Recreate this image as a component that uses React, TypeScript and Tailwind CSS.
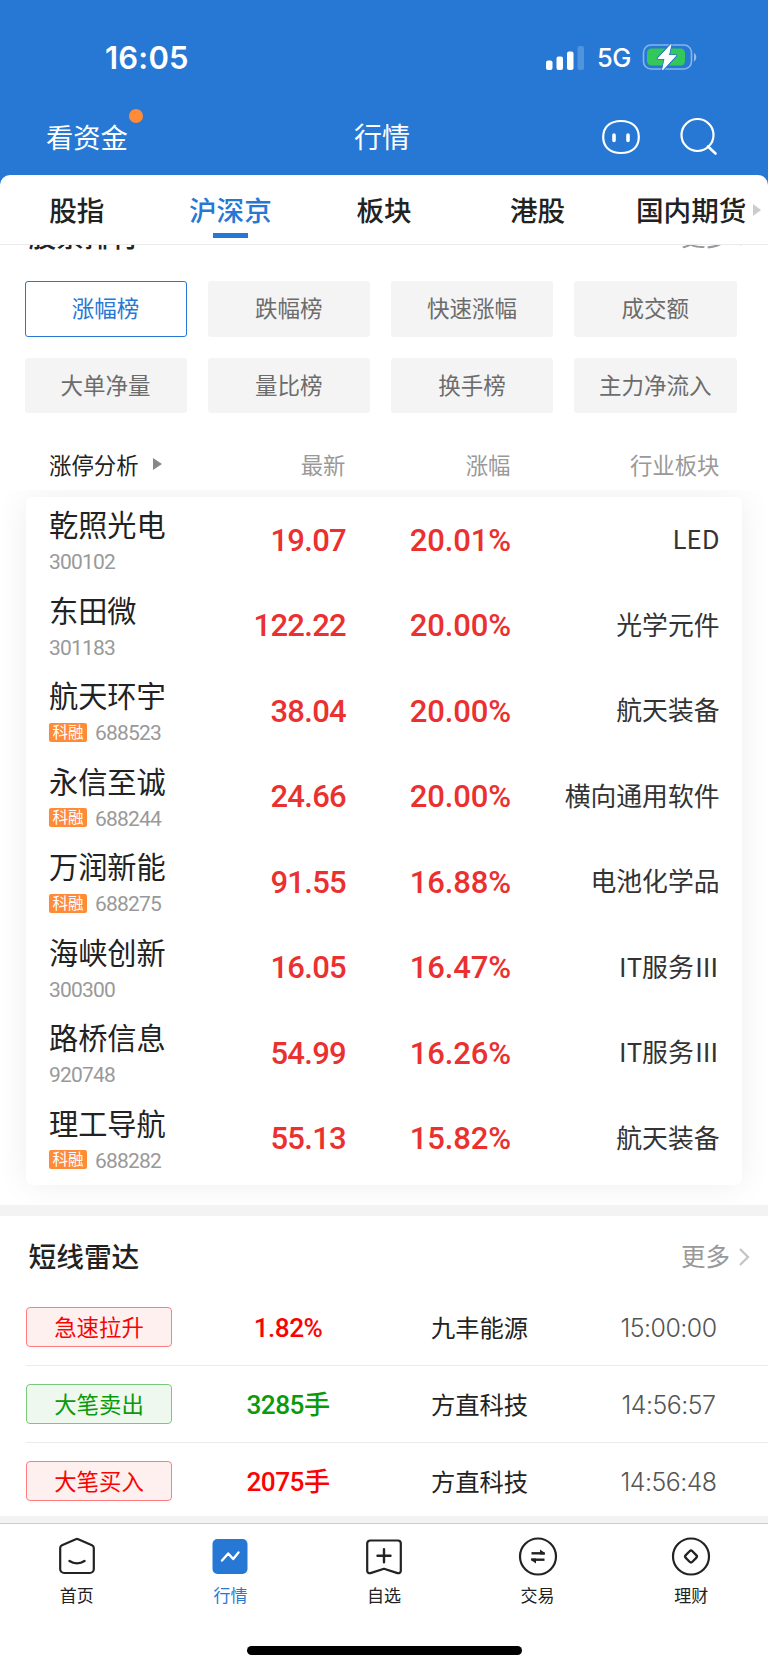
import { useState } from "react";

const tabs = ["股指", "沪深京", "板块", "港股", "国内期货"];

const ranks = ["涨幅榜", "跌幅榜", "快速涨幅", "成交额", "大单净量", "量比榜", "换手榜", "主力净流入"];

const stocks = [
  { name: "乾照光电", code: "300102", price: "19.07", pct: "20.01%", sector: "LED" },
  { name: "东田微", code: "301183", price: "122.22", pct: "20.00%", sector: "光学元件" },
  { name: "航天环宇", code: "688523", price: "38.04", pct: "20.00%", sector: "航天装备", margin: true },
  { name: "永信至诚", code: "688244", price: "24.66", pct: "20.00%", sector: "横向通用软件", margin: true },
  { name: "万润新能", code: "688275", price: "91.55", pct: "16.88%", sector: "电池化学品", margin: true },
  { name: "海峡创新", code: "300300", price: "16.05", pct: "16.47%", sector: "IT服务Ⅲ" },
  { name: "路桥信息", code: "920748", price: "54.99", pct: "16.26%", sector: "IT服务Ⅲ" },
  { name: "理工导航", code: "688282", price: "55.13", pct: "15.82%", sector: "航天装备", margin: true },
];

const radar = [
  { tag: "急速拉升", value: "1.82", unit: "%", name: "九丰能源", time: "15:00:00", up: true },
  { tag: "大笔卖出", value: "3285", unit: "手", name: "方直科技", time: "14:56:57", up: false },
  { tag: "大笔买入", value: "2075", unit: "手", name: "方直科技", time: "14:56:48", up: true },
];

function StatusBar() {
  return (
    <div className="h-[99px] pt-4 flex items-center justify-between pl-[105px] pr-[69px]">
      <span className="font-['Inter'] font-semibold text-[31px] leading-none tracking-[0.2px]">16:05</span>
      <div className="flex items-center">
        <svg width="39" height="26" viewBox="0 0 39 26" fill="#fff">
          <rect x="0" y="15.5" width="6.5" height="9.5" rx="2" />
          <rect x="10.500" y="11.500" width="6.5" height="13.5" rx="2" />
          <rect x="21" y="6.500" width="6.5" height="18.5" rx="2" />
          <rect x="31.500" y="1" width="6.5" height="24" rx="2" opacity="0.2" />
        </svg>
        <span className="ml-[12px] mt-px w-[35px] font-['Inter'] font-medium text-[25.500px] leading-none tracking-[-0.6px]">5G</span>
        <svg className="ml-[10px] mr-px -mt-[2px]" width="56" height="28" viewBox="0 0 56 28">
          <rect x="1.5" y="2" width="48" height="24" rx="7.5" fill="none" stroke="#fff" strokeOpacity="0.45" strokeWidth="1.6" />
          <rect x="5" y="5.5" width="38" height="17" rx="4.5" fill="#34c759" />
          <path d="M52 10v8.500c3-1.700 3-6.800 0-8.500z" fill="#fff" fillOpacity="0.5" />
          <path
            d="M29 1.500 16 15.500h7L20.500 27 34 12.500h-7.500z"
            fill="#fff"
            stroke="#2678d4"
            strokeWidth="2.600"
            paintOrder="stroke"
            strokeLinejoin="round"
          />
          <path d="M29 1.500 16 15.500h7L20.500 27 34 12.500h-7.500z" fill="#fff" stroke="#fff" strokeWidth="0.800" strokeLinejoin="round" />
        </svg>
      </div>
    </div>
  );
}

function NavBar() {
  return (
    <div className="h-[76px] grid grid-cols-3 items-center pl-[46px] pr-[50px]">
      <div className="relative -mt-[3px] justify-self-start text-[27.300px] leading-10">
        看资金
        <i className="absolute left-[83px] -top-[7px] size-[14px] rounded-full bg-[#ff8b38]" />
      </div>
      <div className="-mt-[3px] justify-self-center text-[28px] leading-10">行情</div>
      <div className="justify-self-end flex items-center">
        <svg width="40" height="36" viewBox="0 0 40 36" fill="none" stroke="#fff">
          <path
            d="M20 2c11 0 17.800 6 17.800 16S31 34 20 34 2.200 28 2.200 18 9 2 20 2z"
            strokeWidth="2.200"
          />
          <path d="M13 16v5.500M27 16v5.500" strokeWidth="3.600" strokeLinecap="round" />
        </svg>
        <svg className="ml-[37px] -mt-[2px]" width="40" height="40" viewBox="0 0 40 40" fill="none" stroke="#fff" strokeWidth="2.200">
          <circle cx="19.500" cy="19" r="16" />
          <path d="M30 30.500l7.500 7" strokeWidth="2.600" strokeLinecap="round" />
        </svg>
      </div>
    </div>
  );
}

function SectionTitle({ title }: { title: string }) {
  return (
    <div className="flex items-center justify-between pl-[28.500px] pr-[18px] h-10 leading-10">
      <h2 className="-mt-[4px] text-[27.700px] font-medium">{title}</h2>
      <div className="flex items-center text-[#999] text-[24.500px]">
        <span className="-mt-[3px]">更多</span>
        <svg className="ml-[8px] -mt-px" width="12" height="20" viewBox="0 0 12 20" fill="none" stroke="#c4c4c4" strokeWidth="2.200">
          <path d="M2 2l8 8-8 8" />
        </svg>
      </div>
    </div>
  );
}

function TabIcon({ name, active }: { name: string; active: boolean }) {
  if (name === "行情") {
    return (
      <svg width="40" height="40" viewBox="0 0 40 40" fill="none">
        <rect x="2.500" y="2" width="35" height="35" rx="5" fill={active ? "#2678d4" : "#222"} />
        <path d="M12 23.500l6.200-7 5 5.500 5.300-6.500" stroke="#fff" strokeWidth="2.400" strokeLinecap="round" strokeLinejoin="round" />
      </svg>
    );
  }
  return (
    <svg width="40" height="40" viewBox="0 0 40 40" fill="none" stroke="#222" strokeWidth="2.200" strokeLinejoin="round" strokeLinecap="round">
      {name === "首页" && (
        <>
          <path d="M18.800 2.200a3 3 0 0 1 2.400 0L35 8.200a3 3 0 0 1 1.800 2.800V32a4 4 0 0 1-4 4H7.200a4 4 0 0 1-4-4V11A3 3 0 0 1 5 8.200z" />
          <path d="M12.500 24c4.500 3 10.500 3 15 0" strokeWidth="2.400" />
        </>
      )}
      {name === "自选" && (
        <>
          <path d="M6.200 3.500h27.600a3 3 0 0 1 3 3v27.200a2.500 2.500 0 0 1-3.300 2.400L20 31.800 6.500 36.100a2.500 2.500 0 0 1-3.300-2.400V6.500a3 3 0 0 1 3-3z" />
          <path d="M20 12.200v13M13.500 18.700h13" strokeWidth="2.400" />
        </>
      )}
      {name === "交易" && (
        <>
          <circle cx="20" cy="19.500" r="18" />
          <path d="M13.500 16.300h13" strokeWidth="2.400" strokeLinecap="butt" />
          <path d="M13.500 22.700h13" strokeWidth="2.400" strokeLinecap="butt" />
          <path d="M22 12.500l5 3.500v1.500h-5zM18 26.500l-5-3.500v-1.500h5z" fill="#222" stroke="none" />
        </>
      )}
      {name === "理财" && (
        <>
          <circle cx="20" cy="19.500" r="18" />
          <rect x="15.300" y="14.800" width="9.400" height="9.400" rx="2" transform="rotate(45 20 19.5)" strokeWidth="2.300" />
        </>
      )}
    </svg>
  );
}

export default function App() {
  const [tab, setTab] = useState("沪深京");
  const [rank, setRank] = useState("涨幅榜");
  const [page, setPage] = useState("行情");

  return (
    <div className="w-[768px] h-[1669px] flex flex-col overflow-hidden bg-white text-[#222] font-['Noto_Sans_CJK_SC',sans-serif]">
      {/* Header */}
      <div className="bg-[#2678d4] text-white shrink-0">
        <StatusBar />
        <NavBar />
        <div className="relative grid grid-cols-5 h-[70px] rounded-t-[10px] bg-white text-[#222] border-b border-[#ebebeb]">
          {tabs.map((t) => (
            <button
              key={t}
              onClick={() => setTab(t)}
              className={`flex flex-col items-center pt-[14px] text-[27.600px] leading-10 font-medium whitespace-nowrap ${
                tab === t ? "text-[#2678d4]" : ""
              }`}
            >
              {t}
              {tab === t && <i className="w-[35px] h-[5px] mt-[4px] bg-[#2678d4]" />}
            </button>
          ))}
          <svg className="absolute right-[7px] top-[29px]" width="8" height="12" viewBox="0 0 8 12" fill="#ccc">
            <path d="M0 0l8 6-8 6z" />
          </svg>
        </div>
      </div>

      {/* Ranking */}
      <section className="h-[960px] shrink-0 overflow-hidden">
        <div className="-mt-[28px]">
          <SectionTitle title="股票排行" />
        </div>
        <div className="grid grid-cols-4 gap-[21px] mt-[24px] pl-[24.500px] pr-[31.500px]">
          {ranks.map((r) => (
            <button
              key={r}
              onClick={() => setRank(r)}
              className={`h-[55.500px] pb-px rounded-[3px] text-[22.500px] ${
                rank === r ? "border border-[#2678d4] text-[#2678d4]" : "bg-[#f4f4f4] text-[#6c6c6c]"
              }`}
            >
              {r}
            </button>
          ))}
        </div>
        <div className="flex items-center mt-[33px] h-[36px] pl-[49px] text-[22.400px] leading-9 text-[#999]">
          <div className="w-[176px] flex items-center text-[#222] whitespace-nowrap">
            涨停分析
            <svg className="ml-[14px]" width="10" height="12" viewBox="0 0 10 12" fill="#888">
              <path d="M0 0l9 6-9 6z" />
            </svg>
          </div>
          <div className="w-[120.500px] text-right">最新</div>
          <div className="w-[165px] text-right">涨幅</div>
          <div className="w-[209px] text-right">行业板块</div>
        </div>
        {/* Clips the upper part of the card shadow */}
        <div className="mt-[8px] pt-[7px] pb-[21px] overflow-hidden">
          <div className="mx-[26px] h-[687.500px] rounded-[6px] bg-white shadow-[0_0_34px_rgba(0,0,0,0.07)]">
            {stocks.map((s) => (
              <div key={s.code} className="flex items-center h-[85.500px] pl-[23px]">
                <div className="w-[176px]">
                  <div className="text-[29.200px] leading-[42px]">{s.name}</div>
                  <div className="flex items-center h-[33px] pt-px text-[#999]">
                    {s.margin && (
                      <span className="w-[38px] h-[19px] mr-[8px] rounded-[2px] bg-[#ff8b38] text-center text-[15.500px] leading-[17px] text-white">
                        科融
                      </span>
                    )}
                    <span className="mt-[3px] font-['Roboto'] text-[21px] leading-none tracking-[-0.8px]">{s.code}</span>
                  </div>
                </div>
                <div className="w-[121px] pt-[2px] text-right font-['Roboto'] font-medium text-[31px] tracking-[-0.7px] text-[#eb3030]">{s.price}</div>
                <div className="w-[165px] pt-[2px] text-right font-['Roboto'] font-medium text-[31px] tracking-[-0.1px] text-[#eb3030]">{s.pct}</div>
                <div className="w-[208.500px] pb-[2px] text-right text-[25.800px] text-[#333]">{s.sector}</div>
              </div>
            ))}
          </div>
        </div>
      </section>

      <div className="h-[11px] shrink-0 bg-[#f3f3f3]" />

      {/* Short-term radar */}
      <section className="h-[300px] shrink-0 pt-[21px]">
        <SectionTitle title="短线雷达" />
        <div className="mt-[12px]">
          {radar.map((r) => (
            <div key={r.time} className="ml-[26px] h-[77px] flex items-center border-b border-[#ebebeb] last:border-transparent">
              <div
                className={`shrink-0 w-[146px] h-[40px] rounded-[4px] border text-center text-[22.400px] leading-[36px] ${
                  r.up ? "border-[#ff7b7f] bg-[#fff0f0] text-[#fb0303]" : "border-[#7ac97a] bg-[#eff8ef] text-[#0a9a0a]"
                }`}
              >
                {r.tag}
              </div>
              <div
                className={`shrink-0 w-[232px] pt-[2px] text-center font-['Roboto','Noto_Sans_CJK_SC'] font-medium text-[26.200px] leading-9 tracking-[-0.5px] ${
                  r.up ? "text-[#fb0303]" : "text-[#0a9a0a]"
                }`}
              >
                {r.value}
                {r.unit}
              </div>
              <div className="shrink-0 w-[151px] text-center text-[24.300px]">{r.name}</div>
              <div className="shrink-0 w-[227px] pt-[3px] text-center font-['Inter'] font-light text-[24.900px] tracking-[-0.5px] text-[#555]">{r.time}</div>
            </div>
          ))}
        </div>
      </section>

      {/* Bottom tabs */}
      <div className="h-[7px] shrink-0 bg-[#f3f3f3]" />
      <div className="grow border-t border-[#ccc] flex flex-col items-center">
        <div className="w-full grid grid-cols-5 pt-[13px]">
          {["首页", "行情", "自选", "交易", "理财"].map((p) => (
            <button key={p} onClick={() => setPage(p)} className="flex flex-col items-center">
              <TabIcon name={p} active={page === p} />
              <span className={`mt-[5px] text-[17px] leading-[26px] ${page === p ? "text-[#2678d4]" : ""}`}>{p}</span>
            </button>
          ))}
        </div>
        <div className="mt-[38px] w-[275px] h-[9px] rounded-full bg-black" />
      </div>
    </div>
  );
}
